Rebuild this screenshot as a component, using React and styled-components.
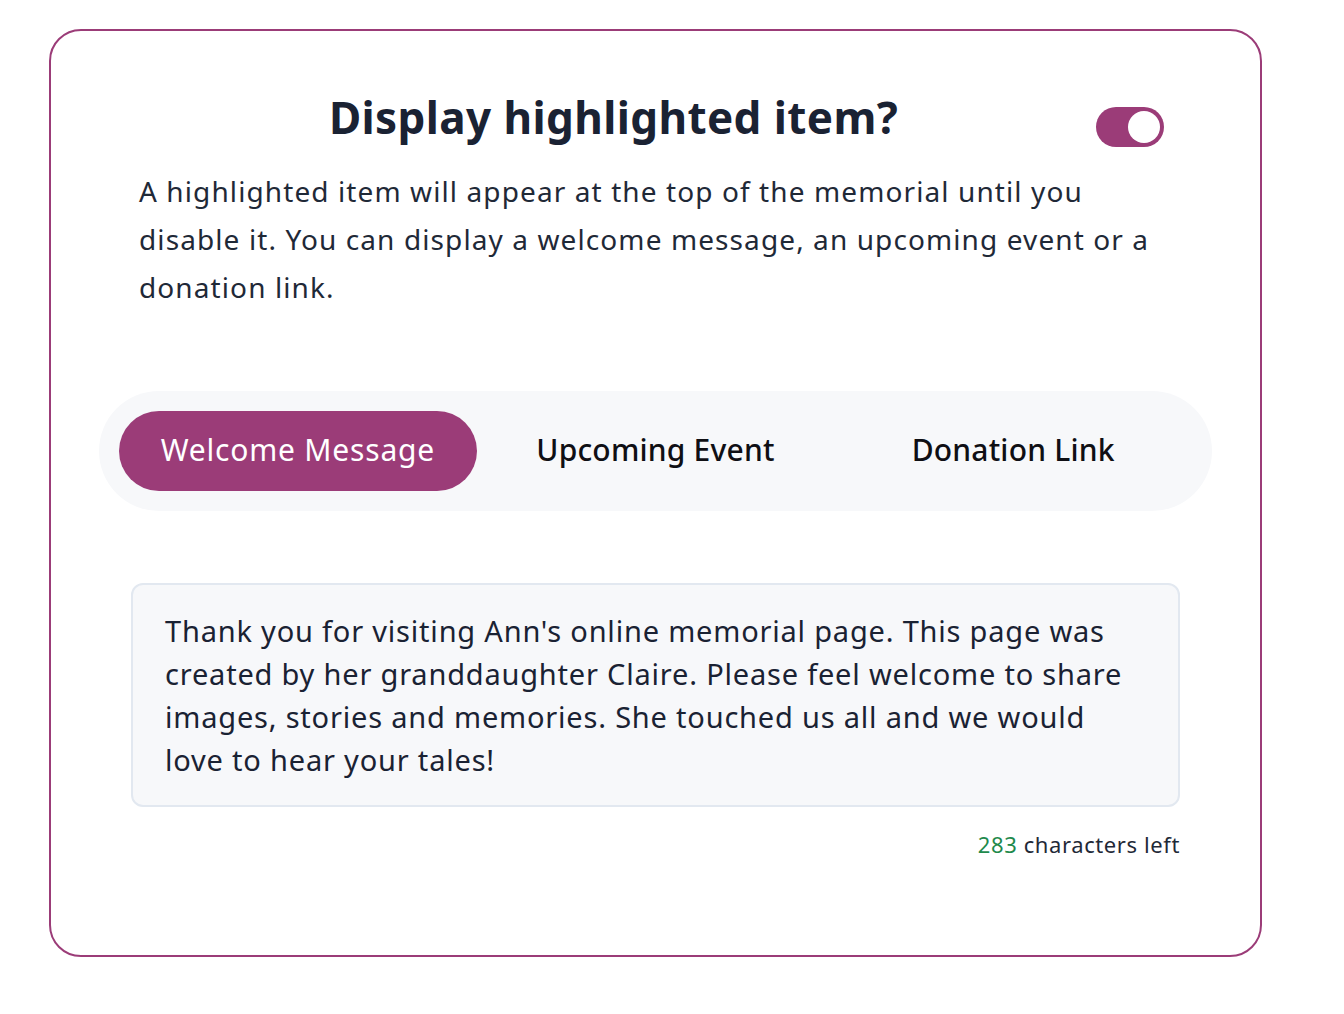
import React, { useState } from "react";
import styled, { createGlobalStyle } from "styled-components";

const GlobalStyle = createGlobalStyle`
  body {
    margin: 0;
    background: #ffffff;
    font-family: "Noto Sans", "Open Sans", sans-serif;
  }
`;

const Page = styled.div`
  padding: 29px 0 0 49px;
`;

const Card = styled.section`
  box-sizing: border-box;
  width: 1213px;
  height: 928px;
  border: 2px solid #9b3c78;
  border-radius: 32px;
  padding: 57px 48px 0;
  color: #1f2937;
`;

const TitleRow = styled.div`
  display: flex;
  align-items: flex-start;
  gap: 8px;
  padding: 0 48px 0 40px;
`;

const Title = styled.h2`
  flex: 1;
  margin: 0;
  text-align: center;
  font-size: 44px;
  line-height: 58px;
  font-weight: 700;
  letter-spacing: 0.4px;
  color: #1a2233;
`;

const Toggle = styled.button`
  position: relative;
  flex: none;
  width: 68px;
  height: 40px;
  margin-top: 19px;
  border: none;
  border-radius: 20px;
  padding: 0;
  background: ${(p) => (p.on ? "#9b3c78" : "#d1d5db")};
  cursor: pointer;

  &::after {
    content: "";
    position: absolute;
    top: 4px;
    left: ${(p) => (p.on ? "32px" : "4px")};
    width: 32px;
    height: 32px;
    border-radius: 50%;
    background: #ffffff;
  }
`;

const Description = styled.p`
  margin: 20px 0 0;
  padding: 0 48px 0 40px;
  font-size: 28px;
  line-height: 48px;
  letter-spacing: 1.1px;
  color: #1f2937;
`;

const Tabs = styled.div`
  display: grid;
  grid-template-columns: repeat(3, 1fr);
  margin-top: 80px;
  padding: 20px;
  border-radius: 60px;
  background: #f7f8fa;
`;

const Tab = styled.button`
  height: 80px;
  border: none;
  border-radius: 40px;
  padding: 0 0 3px;
  background: ${(p) => (p.active ? "#9b3c78" : "transparent")};
  color: ${(p) => (p.active ? "#ffffff" : "#0f0f14")};
  font-family: inherit;
  font-size: 30px;
  font-weight: ${(p) => (p.active ? 400 : 500)};
  letter-spacing: ${(p) => (p.active ? "0.8px" : "0.2px")};
  cursor: pointer;
`;

const MessageBox = styled.textarea`
  display: block;
  box-sizing: border-box;
  width: calc(100% - 64px);
  height: 224px;
  margin: 72px 32px 0;
  padding: 24px 32px 22px;
  border: 2px solid #e2e8f0;
  border-radius: 12px;
  background: #f7f8fa;
  color: #1a2233;
  font-family: inherit;
  font-size: 29px;
  line-height: 43px;
  letter-spacing: 0.8px;
  resize: none;
  outline: none;
`;

const Counter = styled.div`
  margin: 22px 32px 0;
  text-align: right;
  font-size: 22px;
  line-height: 30px;
  letter-spacing: 0.6px;
  color: #1f2937;
`;

const Left = styled.span`
  color: #1f8a4c;
`;

const message =
  "Thank you for visiting Ann's online memorial page. This page was created by her granddaughter Claire. Please feel welcome to share images, stories and memories. She touched us all and we would love to hear your tales!";

export default function App() {
  const [on, setOn] = useState(true);
  const [tab, setTab] = useState(0);
  const [text, setText] = useState(message);

  return (
    <Page>
      <GlobalStyle />
      <Card>
        <TitleRow>
          <Title>Display highlighted item?</Title>
          <Toggle on={on} onClick={() => setOn((s) => !s)} aria-label="toggle" />
        </TitleRow>
        <Description>
          A highlighted item will appear at the top of the memorial until you
          disable it. You can display a welcome message, an upcoming event or a
          donation link.
        </Description>
        <Tabs>
          {["Welcome Message", "Upcoming Event", "Donation Link"].map((t, i) => (
            <Tab key={t} active={tab === i} onClick={() => setTab(i)}>
              {t}
            </Tab>
          ))}
        </Tabs>
        <MessageBox value={text} onChange={(e) => setText(e.target.value)} />
        <Counter>
          <Left>{500 - text.length}</Left> characters left
        </Counter>
      </Card>
    </Page>
  );
}
